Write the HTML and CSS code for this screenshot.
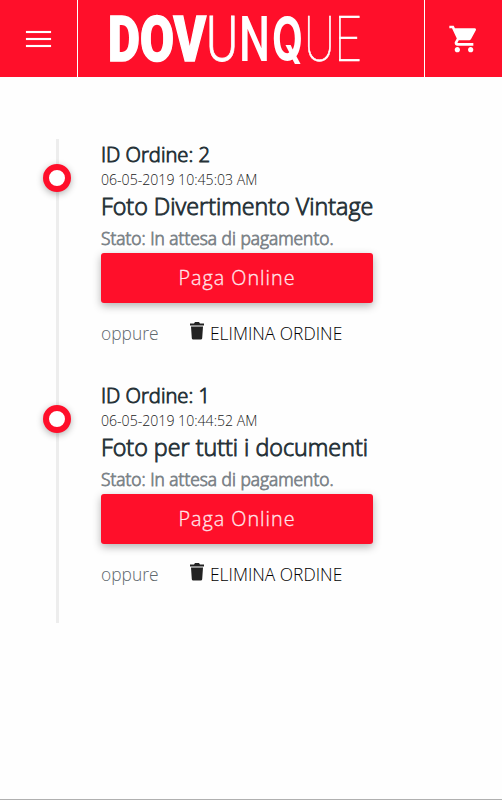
FILE: index.html
```
<!DOCTYPE html>
<html lang="it">
<head>
  <meta charset="UTF-8" />
  <meta name="viewport" content="width=device-width, initial-scale=1.0"/>
  <title>Dovunque - Ordini</title>
  <link rel="stylesheet" href="styles.css">
</head>
<body>
  <header class="navbar">
    <a class="nav-btn menu" href="#" aria-label="Menu">
      <span></span>
      <span></span>
      <span></span>
    </a>
    <a class="brand" href="#">
      <svg width="270" height="77" viewBox="0 0 270 77" fill="#fff">
        <text class="logo-black" x="2" y="61" textLength="98" lengthAdjust="spacingAndGlyphs">DOV</text>
        <text class="logo-light" x="100" y="61" textLength="32" lengthAdjust="spacingAndGlyphs">U</text>
        <text class="logo-medium" x="133" y="61" textLength="31" lengthAdjust="spacingAndGlyphs">N</text>
        <text class="logo-bold" x="166" y="60" textLength="31" lengthAdjust="spacingAndGlyphs">Q</text>
        <text class="logo-thin" x="198" y="61" textLength="57" lengthAdjust="spacingAndGlyphs">UE</text>
      </svg>
    </a>
    <a class="nav-btn cart" href="#" aria-label="Carrello">
      <svg width="32" height="32" viewBox="0 0 24 24" fill="#fff"><path d="M7 18c-1.1 0-1.99.9-1.99 2S5.9 22 7 22s2-.9 2-2-.9-2-2-2zM1 2v2h2l3.6 7.59-1.35 2.45c-.16.28-.25.61-.25.96 0 1.1.9 2 2 2h12v-2H7.42c-.14 0-.25-.11-.25-.25l.03-.12.9-1.63h7.45c.75 0 1.41-.41 1.75-1.03l3.58-6.49c.08-.14.12-.31.12-.48 0-.55-.45-1-1-1H5.21l-.94-2H1zm16 16c-1.1 0-1.99.9-1.99 2s.89 2 1.99 2 2-.9 2-2-.9-2-2-2z"/></svg>
    </a>
  </header>

  <main class="timeline">
    <div class="order">
      <div class="dot"></div>
      <h5 class="order-id">ID Ordine: 2</h5>
      <div class="date">06-05-2019 10:45:03 AM</div>
      <h4 class="title">Foto Divertimento Vintage</h4>
      <div class="status">Stato: In attesa di pagamento.</div>
      <a class="btn" href="#">Paga Online</a>
      <div class="actions">
        <span class="or">oppure</span>
        <a class="delete" href="#">
          <svg width="14" height="18" viewBox="0 0 14 18" fill="#222"><path d="M0 1.600h4L5 0h4l1 1.600h4v2H0zM1 4.600h12L12.200 16.200q-.1 1.300-1.500 1.300H3.300q-1.400 0-1.500-1.300z"/></svg>
          <span class="delete-text">ELIMINA ORDINE</span>
        </a>
      </div>
    </div>

    <div class="order">
      <div class="dot"></div>
      <h5 class="order-id">ID Ordine: 1</h5>
      <div class="date">06-05-2019 10:44:52 AM</div>
      <h4 class="title">Foto per tutti i documenti</h4>
      <div class="status">Stato: In attesa di pagamento.</div>
      <a class="btn" href="#">Paga Online</a>
      <div class="actions">
        <span class="or">oppure</span>
        <a class="delete" href="#">
          <svg width="14" height="18" viewBox="0 0 14 18" fill="#222"><path d="M0 1.600h4L5 0h4l1 1.600h4v2H0zM1 4.600h12L12.200 16.200q-.1 1.300-1.500 1.300H3.300q-1.400 0-1.500-1.300z"/></svg>
          <span class="delete-text">ELIMINA ORDINE</span>
        </a>
      </div>
    </div>
  </main>
</body>
</html>
```
FILE: styles.css
```
:root {
  --primary: #ff0f2a;
  --dark: #263238;
  --muted: #7d8489;
}

* {
  box-sizing: border-box;
}

body {
  margin: 0;
  min-height: 800px;
  font-family: "Open Sans", sans-serif;
  font-weight: 300;
  color: #212121;
  background: #fefefe;
  border-bottom: 1px solid #b0b0b0;
}

a {
  text-decoration: none;
  color: inherit;
}

.navbar {
  display: flex;
  height: 77px;
  background: var(--primary);
}

.nav-btn {
  width: 77px;
  display: flex;
  align-items: center;
  justify-content: center;
}

.menu {
  flex-direction: column;
  gap: 5px;
}

.menu span {
  width: 25px;
  height: 2px;
  background: #fff;
  box-shadow: 0 0 1px rgba(255,255,255,0.7);
}

.brand {
  flex: 1;
  padding-left: 28px;
  border-left: 1px solid #fff;
  border-right: 1px solid #fff;
}

.brand svg {
  display: block;
}

.brand text {
  font-family: Roboto, sans-serif;
  font-size: 63px;
}

.brand .logo-black {
  font-weight: 900;
  stroke: #fff;
  stroke-width: 1.5px;
}

.brand .logo-bold {
  font-family: Inter, sans-serif;
  font-size: 59px;
  font-weight: 700;
}

.brand .logo-medium { font-weight: 500; }
.brand .logo-light { font-weight: 300; stroke: #fff; stroke-width: 0.8px; }
.brand .logo-thin { font-weight: 100; stroke: #fff; stroke-width: 0.6px; }

.timeline {
  margin: 62px 0 0 56px;
  width: 318px;
  height: 484px;
  border-left: 3px solid #ededed;
}

.order {
  position: relative;
  height: 241px;
  padding-left: 42px;
}

.dot {
  position: absolute;
  left: -16px;
  top: 25px;
  width: 28px;
  height: 28px;
  border: 6px solid var(--primary);
  border-radius: 50%;
  background: #fff;
  box-shadow: 0 2px 7px rgba(0,0,0,0.3);
}

.order-id, .title {
  margin: 0;
  color: var(--dark);
  font-weight: 300;
  white-space: nowrap;
  -webkit-text-stroke: 0.9px var(--dark);
}

.order-id {
  font-size: 20.2px;
  line-height: 31px;
}

.date {
  font-size: 14.1px;
  line-height: 20px;
}

.title {
  font-size: 23.3px;
  line-height: 33px;
}

.status {
  font-size: 17.4px;
  line-height: 30px;
  font-weight: 300;
  color: var(--muted);
  -webkit-text-stroke: 0.8px var(--muted);
}

.btn {
  display: block;
  width: 272px;
  height: 50px;
  line-height: 50px;
  text-align: center;
  font-size: 19.8px;
  letter-spacing: 1px;
  color: #ffe6ea;
  -webkit-text-stroke: 0.3px #ffe6ea;
  background: var(--primary);
  border-radius: 3px;
  box-shadow: 0 3px 8px rgba(0,0,0,0.3);
}

.actions {
  display: flex;
  align-items: center;
  height: 59px;
  font-size: 17.4px;
}

.or {
  width: 89px;
  color: #5f686d;
}

.delete {
  display: flex;
  align-items: center;
  gap: 6px;
  color: #000;
}

.delete svg {
  margin-bottom: 4px;
}
```
